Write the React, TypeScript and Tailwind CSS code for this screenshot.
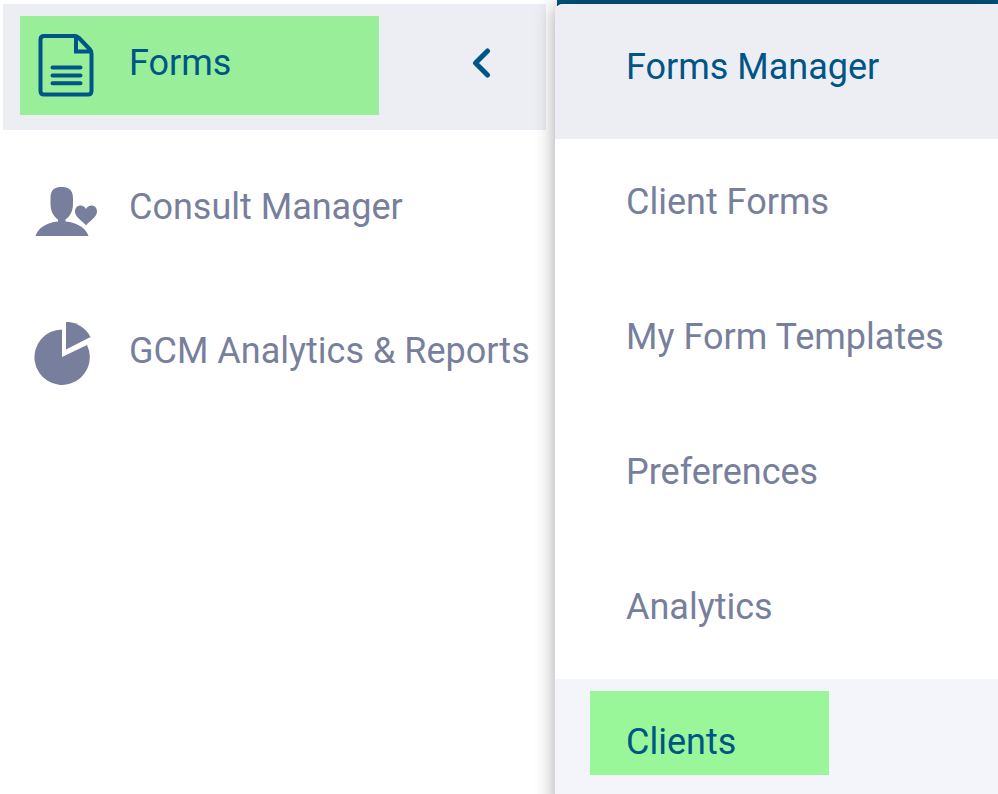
import type { ReactNode } from 'react';
import clsx from 'clsx';

type MainItem = {
  label: string;
  icon: ReactNode;
  active?: boolean;
};

const FormIcon = () => (
  <svg
    viewBox="0 0 56 64"
    className="w-14 h-16"
    fill="none"
    stroke="currentColor"
    strokeWidth="4"
    strokeLinejoin="round"
    strokeLinecap="round"
    aria-hidden="true"
  >
    <path d="M37 2H6Q2.500 2 2.500 5.500V57Q2.500 60.500 6 60.500H50Q53.500 60.500 53.500 57V20Q53.500 17.500 52 15.500L41 4Q39 2 37 2Z" />
    <path d="M38 2.500V17.500H53" strokeLinejoin="miter" />
    <path d="M14.500 33.500H42.500M14.500 41.500H42.500M14.500 49.300H42.500" strokeWidth="4" />
  </svg>
);

const ConsultIcon = () => (
  <svg viewBox="0 0 62 50" className="w-[62px] h-[50px] mt-1" fill="currentColor" aria-hidden="true">
    <path d="M26.500 0C33 0 38 2.500 38 11V17C38 25 34 30.500 30.500 32.500V34.500C43 35.500 51.500 42 53.500 49H0.500C2.500 42 10.500 35.500 23 34.500V32.500C19.500 30.500 15.500 25 15.500 17V11C15.500 2.500 20 0 26.500 0Z" />
    <path d="M51 38.500C48.500 34.500 40 30.500 40 24.500C40 17.500 48.500 16.500 51 22C53.500 16.500 62 17.500 62 24.500C62 30.500 53.500 34.500 51 38.500Z" />
  </svg>
);

const ReportsIcon = () => (
  <svg viewBox="0 0 64 64" className="w-16 h-16" fill="currentColor" aria-hidden="true">
    <path d="M28 7.500V35L53 23A27.700 27.700 0 1 1 28 7.500Z" />
    <path d="M32 -0.200A27.500 27.500 0 0 1 56.500 15L32 27.500Z" />
  </svg>
);

const mainItems: MainItem[] = [
  { label: 'Forms', icon: <FormIcon />, active: true },
  { label: 'Consult Manager', icon: <ConsultIcon /> },
  { label: 'GCM Analytics & Reports', icon: <ReportsIcon /> },
];

const subItems = ['Client Forms', 'My Form Templates', 'Preferences', 'Analytics', 'Clients'];

const App = () => {
  return (
    <div className="flex h-screen overflow-hidden bg-white font-['Roboto',sans-serif] text-4xl text-[#787f9c]">
      <nav aria-label="Main" className="w-[555px] shrink-0 pt-1 pl-[3px] pr-[9px]">
        <ul className="flex flex-col gap-[18px]">
          {mainItems.map((item) => (
            <li
              key={item.label}
              className={clsx(
                'flex items-center justify-between h-[126px] pl-[17px] pr-[55px] pb-[3px]',
                item.active && 'bg-[#edeef4] text-[#005587]',
              )}
            >
              <a
                href="#"
                className={clsx(
                  'flex items-center h-[99px] pl-[14px] whitespace-nowrap',
                  item.active && 'w-[359px] bg-[#99ee99]',
                )}
              >
                <span className="flex w-16 justify-center mr-[31px]">{item.icon}</span>
                <span className="pb-1.5">{item.label}</span>
              </a>
              {item.active && (
                <button type="button" aria-label="Collapse" className="pb-1.5">
                  <svg
                    viewBox="0 0 20 30"
                    className="w-5 h-[30px]"
                    fill="none"
                    stroke="currentColor"
                    strokeWidth="5"
                    strokeLinecap="round"
                    strokeLinejoin="round"
                    aria-hidden="true"
                  >
                    <path d="M16.500 3L4.500 15L16.500 27" />
                  </svg>
                </button>
              )}
            </li>
          ))}
        </ul>
      </nav>

      <div className="flex flex-1 flex-col min-w-0">
        {/* page header showing behind the flyout */}
        <div className="shrink-0 h-3 ml-0.5 bg-[#005587]" />
        <section className="relative flex-1 -mt-2 rounded-tl-lg bg-white shadow-[0_0_20px_rgba(0,0,0,0.36)]">
          <h2 className="flex items-center h-[135px] pl-[71px] pb-2.5 rounded-tl-lg bg-[#edeef4] text-[#005587]">
            Forms Manager
          </h2>
          <ul>
            {subItems.map((label) => {
              const selected = label === 'Clients';
              return (
                <li
                  key={label}
                  className={clsx('h-[135px] pt-3 pl-[35px]', selected && 'bg-[#f4f5fa]')}
                >
                  <a
                    href="#"
                    className={clsx(
                      'flex items-center h-[84px] pl-9 pt-[18px]',
                      selected && 'w-[239px] bg-[#99f799] text-[#005587]',
                    )}
                  >
                    {label}
                  </a>
                </li>
              );
            })}
          </ul>
        </section>
      </div>
    </div>
  );
};

export default App;
